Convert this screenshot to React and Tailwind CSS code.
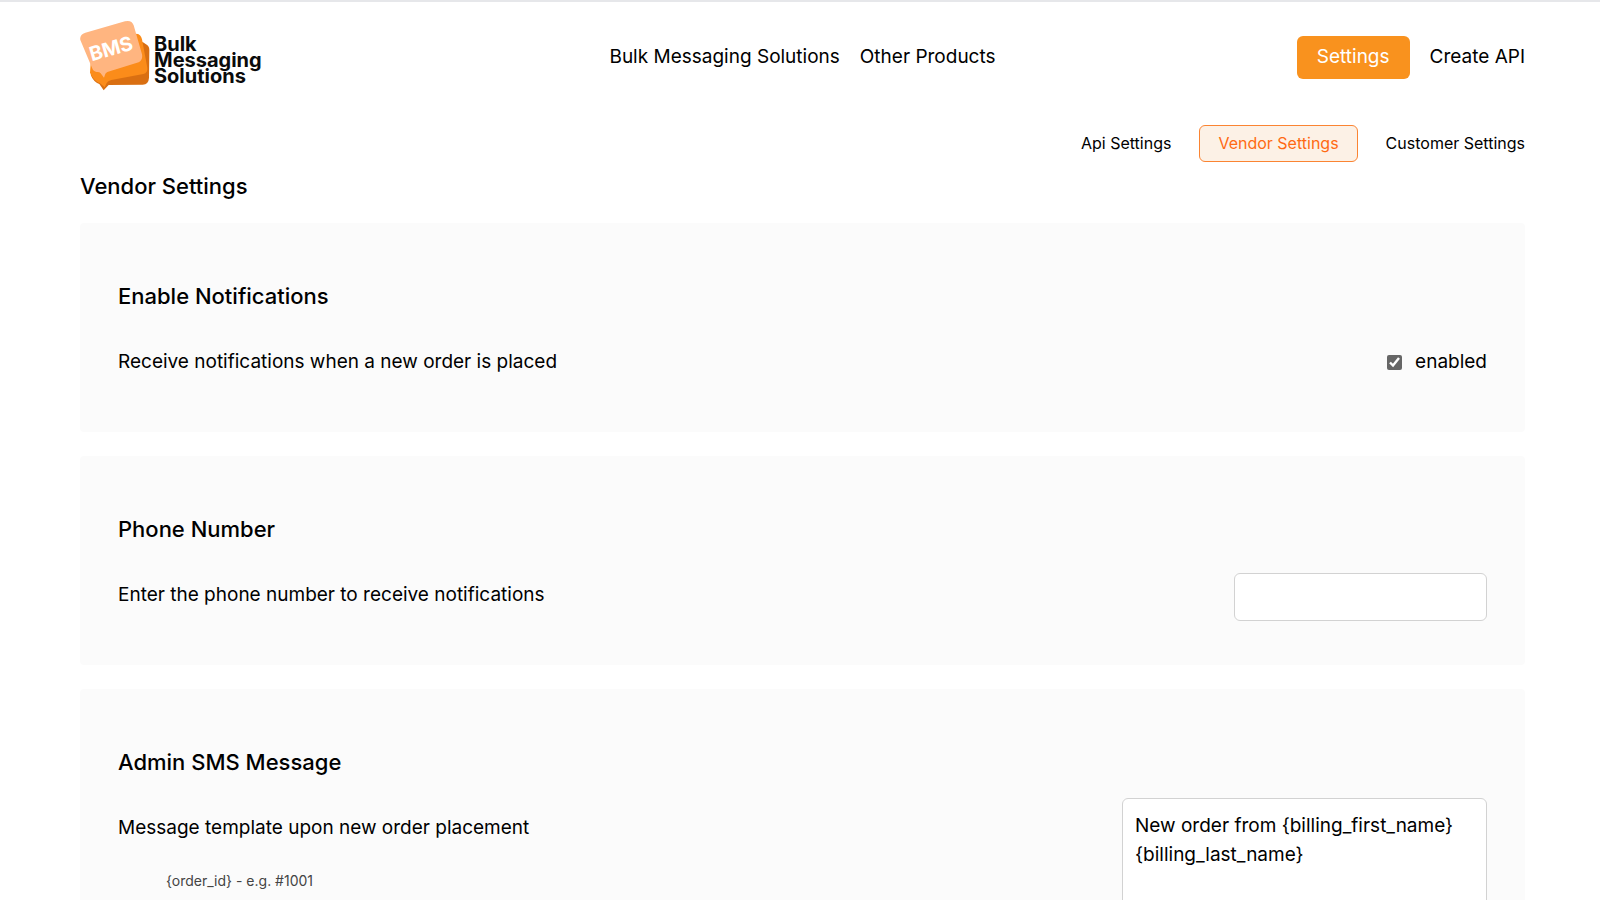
import { useState } from "react";
import clsx from "clsx";

const TABS = ["Api Settings", "Vendor Settings", "Customer Settings"];

function Logo() {
  return (
    <a href="#home" className="flex items-center gap-1 justify-self-start" aria-label="Bulk Messaging Solutions">
      <svg viewBox="30 60 210 213" className="w-[70px] h-[71px]" aria-hidden="true">
        <path fill="#d96f12" d="M218 126 L228 133 Q238 138 238 150 L237 233 Q236 253 218 254 L116 255 L101 271 L88 252 Q70 245 62 224 Z" />
        <path fill="#fb8c1a" d="M200 101 Q213 103 216 118 L232 203 Q234 218 220 222 L124 240 Q113 243 110 249 L104 262 L90 250 Q68 240 60 218 L62 190 Z" />
        <path fill="#ffb580" d="M46 98 L165 64 Q185 59 191 76 L216 163 Q219 180 206 187 L112 216 Q106 219 105 224 L102 233 L92 220 Q88 215 80 216 Q70 214 66 203 L31 120 Q28 104 46 98 Z" />
        <text x="65" y="184" transform="rotate(-16 65 184)" fill="#fff" fontFamily="Inter, sans-serif" fontWeight="700" fontSize="59">BMS</text>
      </svg>
      <span className="pt-2 text-xl leading-4 font-bold text-[#0b0b0b]">
        Bulk<br />Messaging<br />Solutions
      </span>
    </a>
  );
}

function SettingCard({ title, description, htmlFor, hint, children }) {
  return (
    <section className="rounded bg-[#fbfbfb] px-[38px] pt-[58px] pb-[39px]">
      <h2 className="text-[22px] leading-[30px] font-medium">{title}</h2>
      <div className="mt-5 flex min-h-[62px] items-start justify-between gap-8">
        <div className="pt-[17px]">
          <label htmlFor={htmlFor} className="block leading-7">{description}</label>
          {hint && (
            <ul className="mt-[25px] pl-12 text-sm leading-7 text-[#444]">
              <li>{hint}</li>
            </ul>
          )}
        </div>
        {children}
      </div>
    </section>
  );
}

export default function App() {
  const [tab, setTab]         = useState("Vendor Settings");
  const [enabled, setEnabled] = useState(true);
  const [phone, setPhone]     = useState("");
  const [message, setMessage] = useState("New order from {billing_first_name} {billing_last_name}");

  return (
    <div className="min-h-screen border-t-2 border-[#e6e7ea] bg-white pr-[75px] pl-20 font-['Inter',sans-serif] text-[19px] text-black">
      <header className="grid grid-cols-[1fr_auto_1fr] items-center pt-[18px]">
        <Logo />
        <nav className="flex gap-5 pt-1">
          <a href="#bms">Bulk Messaging Solutions</a>
          <a href="#products">Other Products</a>
        </nav>
        <div className="flex items-center gap-5 justify-self-end pt-1">
          <button className="h-[43px] rounded-md bg-[#f9921e] px-5 text-white">Settings</button>
          <a href="#create-api">Create API</a>
        </div>
      </header>

      <nav className="mt-[34px] flex items-center justify-end gap-7 text-base">
        {TABS.map((name) => (
          <button
            key={name}
            onClick={() => setTab(name)}
            className={clsx(
              "h-[37px] pb-[2px]",
              tab === name && "rounded-md border border-[#fb8432] bg-[#fcf1e6] px-[18px] text-[#ff6a13]",
            )}
          >
            {name}
          </button>
        ))}
      </nav>

      <main className="pt-[9px]">
        <h1 className="text-[22px] leading-[30px] font-medium">Vendor Settings</h1>

        <div className="mt-[22px] flex flex-col gap-6">
          <SettingCard title="Enable Notifications" description="Receive notifications when a new order is placed" htmlFor="notify">
            <label className="flex items-center gap-[13px] pt-[17px] leading-7">
              <input
                id="notify"
                type="checkbox"
                checked={enabled}
                onChange={(e) => setEnabled(e.target.checked)}
                className="size-[15px] accent-[#666]"
              />
              enabled
            </label>
          </SettingCard>

          <SettingCard title="Phone Number" description="Enter the phone number to receive notifications" htmlFor="phone">
            <input
              id="phone"
              type="tel"
              value={phone}
              onChange={(e) => setPhone(e.target.value)}
              className="mt-[9px] h-12 w-[253px] rounded-md border border-[#d2d2d2] bg-white px-3"
            />
          </SettingCard>

          <SettingCard
            title="Admin SMS Message"
            description="Message template upon new order placement"
            htmlFor="message"
            hint="{order_id} - e.g. #1001"
          >
            <textarea
              id="message"
              rows={4}
              value={message}
              onChange={(e) => setMessage(e.target.value)}
              className="mt-px w-[365px] resize-none rounded-md border border-[#d2d2d2] bg-white px-3 py-3 leading-[29px]"
            />
          </SettingCard>
        </div>
      </main>
    </div>
  );
}
